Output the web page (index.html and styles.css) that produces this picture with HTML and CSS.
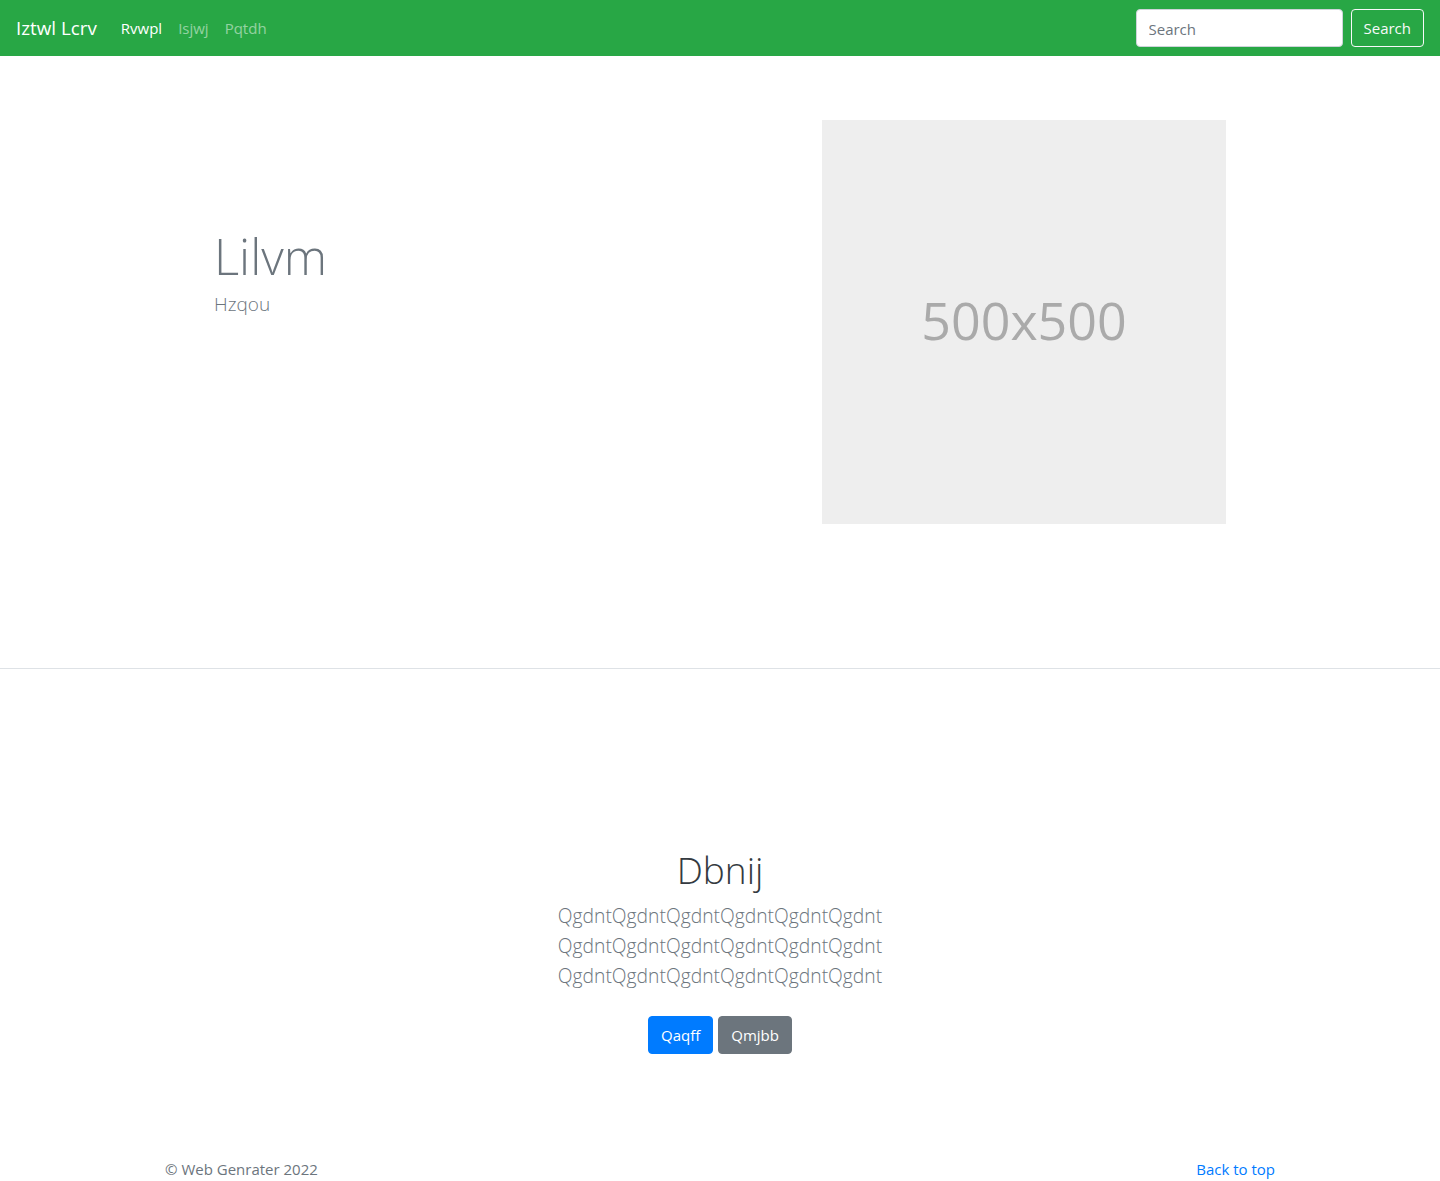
FILE: index.html
```html
<!DOCTYPE html>
<html lang="en">
<head>
<meta charset="utf-8">
<title>Iztwl Lcrv</title>
<link rel="stylesheet" href="styles.css">
</head>
<body>
<nav class="navbar">
  <a class="brand" href="#">Iztwl Lcrv</a>
  <ul class="nav">
    <li><a class="nav-link active" href="#">Rvwpl</a></li>
    <li><a class="nav-link" href="#">Isjwj</a></li>
    <li><a class="nav-link" href="#">Pqtdh</a></li>
  </ul>
  <form class="search">
    <input class="search-input" type="search" placeholder="Search">
    <button class="btn btn-outline-light" type="button">Search</button>
  </form>
</nav>

<section class="hero">
  <div class="hero-inner">
    <div class="hero-text">
      <h1 class="display">Lilvm</h1>
      <p class="lead">Hzqou</p>
    </div>
    <div class="placeholder">500x500</div>
  </div>
</section>

<section class="intro">
  <h1 class="intro-title">Dbnij</h1>
  <p class="intro-lead">QgdntQgdntQgdntQgdntQgdntQgdnt<br>QgdntQgdntQgdntQgdntQgdntQgdnt<br>QgdntQgdntQgdntQgdntQgdntQgdnt</p>
  <div class="actions">
    <a class="btn btn-primary" href="#">Qaqff</a>
    <a class="btn btn-secondary" href="#">Qmjbb</a>
  </div>
</section>

<footer class="footer">
  <p class="copy">© Web Genrater 2022</p>
  <a class="back" href="#">Back to top</a>
</footer>
</body>
</html>
```

FILE: styles.css
```css
* { box-sizing: border-box; }
html, body { margin: 0; padding: 0; }
body {
  font-family: "Open Sans", "Noto Sans", sans-serif;
  font-size: 16px;
  line-height: 1.5;
  color: #212529;
  background: #fff;
}
a { text-decoration: none; }

.navbar {
  height: 56px;
  background: #28a745;
  display: flex;
  align-items: center;
  padding: 8px 16px;
}
.brand {
  color: #fff;
  font-size: 18.8px;
  line-height: 30px;
  margin-right: 16px;
}
.nav {
  list-style: none;
  margin: 0;
  padding: 0;
  display: flex;
  flex: 1;
}
.nav-link {
  display: block;
  padding: 8px;
  font-size: 15px;
  color: rgba(255,255,255,.5);
}
.nav-link.active { color: #fff; }
.search { display: flex; align-items: center; }
.search-input {
  width: 207px;
  height: 38px;
  padding: 7px 12px 5px;
  font: inherit;
  font-size: 15px;
  color: #495057;
  border: 1px solid #ced4da;
  border-radius: 4px;
  margin-right: 8px;
}
.search-input::placeholder { color: #6c757d; }
.btn {
  display: inline-block;
  font: inherit;
  font-size: 15px;
  line-height: 24px;
  padding: 6px 12px;
  border: 1px solid transparent;
  border-radius: 4px;
  cursor: pointer;
}
.btn-outline-light { background: transparent; color: #f8f9fa; border-color: #f8f9fa; }
.btn-primary { background: #007bff; color: #fff; border-color: #007bff; }
.btn-secondary { background: #6c757d; color: #fff; border-color: #6c757d; }

.hero {
  border-bottom: 1px solid #dee2e6;
  padding: 64px 0 144px;
}
.hero-inner {
  width: 1140px;
  margin: 0 auto;
  padding: 0 64px;
  display: flex;
}
.hero-text {
  flex: 1;
  padding-top: 107px;
}
.display {
  margin: 0 0 4px;
  font-size: 49px;
  font-weight: 300;
  line-height: 1.2;
  color: #6c757d;
}
.lead {
  margin: 0;
  font-size: 19px;
  font-weight: 300;
  color: #6c757d;
}
.placeholder {
  width: 404px;
  height: 404px;
  background: #eee;
  color: #aaa;
  display: flex;
  align-items: center;
  justify-content: center;
  font-size: 52px;
  padding-bottom: 4px;
}

.intro {
  text-align: center;
  padding-top: 179px;
}
.intro-title {
  margin: 0 0 9px;
  font-size: 37px;
  font-weight: 300;
  line-height: 1.2;
  color: #343a40;
}
.intro-lead {
  margin: 0 0 25px;
  font-size: 19.3px;
  font-weight: 300;
  line-height: 30px;
  color: #6c757d;
}
.actions { display: flex; justify-content: center; gap: 5px; }

.footer {
  width: 1140px;
  margin: 0 auto;
  padding: 104px 15px 0;
  display: flex;
  justify-content: space-between;
  color: #6c757d;
  font-size: 15px;
}
.copy { margin: 0; }
.back { color: #007bff; }
```
